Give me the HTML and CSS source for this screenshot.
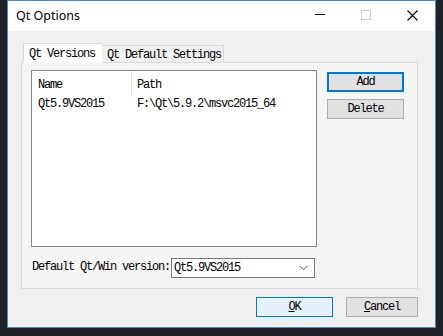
FILE: index.html
```html
<!DOCTYPE html>
<html>
<head>
<meta charset="utf-8">
<link rel="stylesheet" href="styles.css">
</head>
<body>
<div class="window">
  <div class="titlebar">
    <span class="title">Qt Options</span>
    <div class="controls">
      <span class="ctl"><svg width="10" height="10" viewBox="0 0 10 10"><line x1="0" y1="4.5" x2="10" y2="4.5" stroke="#000" stroke-width="1"/></svg></span>
      <span class="ctl"><svg width="10" height="10" viewBox="0 0 10 10"><rect x="0.5" y="0.5" width="9" height="9" fill="none" stroke="#cccccc" stroke-width="1"/></svg></span>
      <span class="ctl"><svg width="11" height="11" viewBox="0 0 11 11"><path d="M0.5 0.5 L10.5 10.5 M10.5 0.5 L0.5 10.5" stroke="#000" stroke-width="1.1" fill="none"/></svg></span>
    </div>
  </div>
  <div class="body">
    <div class="tabs">
      <div class="tabbar">
        <div class="tab active">Qt Versions</div>
        <div class="tab">Qt Default Settings</div>
      </div>
      <div class="pane">
        <div class="main">
          <div class="list">
            <div class="hdr"><span class="c1">Name</span><span class="c2">Path</span></div>
            <div class="row"><span class="c1">Qt5.9VS2015</span><span class="c2">F:\Qt\5.9.2\msvc2015_64</span></div>
          </div>
          <div class="side">
            <button class="btn default">Add</button>
            <button class="btn">Delete</button>
          </div>
        </div>
        <div class="defrow">
          <span class="lbl">Default Qt/Win version:</span>
          <div class="combo">
            <span class="val">Qt5.9VS2015</span>
            <svg width="9" height="6" viewBox="0 0 9 6"><path d="M0.5 0.8 L4.5 4.8 L8.5 0.8" stroke="#555" stroke-width="1" fill="none"/></svg>
          </div>
        </div>
      </div>
    </div>
    <div class="footer">
      <button class="btn ok"><u>O</u>K</button>
      <button class="btn cancel"><u>C</u>ancel</button>
    </div>
  </div>
</div>
</body>
</html>
```
FILE: styles.css
```css
html, body {
  margin: 0;
  padding: 0;
}
body {
  background: #1f2327;
  width: 443px;
  height: 336px;
  overflow: hidden;
  font-family: "Liberation Mono", monospace;
  font-size: 12px;
  letter-spacing: -1.2px;
  color: #000;
}
.window {
  margin-left: 7px;
  width: 429px;
  height: 328px;
  box-sizing: border-box;
  border: 1px solid #4a88c8;
  background: #f0f0f0;
  display: flex;
  flex-direction: column;
}
.titlebar {
  height: 30px;
  background: #fff;
  display: flex;
  align-items: center;
  padding-left: 8px;
  flex: none;
}
.title {
  font-family: "Noto Sans", sans-serif;
  font-size: 12.5px;
  letter-spacing: 0;
  padding-bottom: 1px;
}
.controls {
  margin-left: auto;
  display: flex;
  height: 30px;
}
.ctl {
  width: 46px;
  height: 30px;
  display: flex;
  align-items: center;
  justify-content: center;
  padding-bottom: 2px;
  box-sizing: border-box;
}
.body {
  padding: 12px 17px 10px 13px;
  display: flex;
  flex-direction: column;
}
.tabbar {
  display: flex;
  align-items: flex-end;
  height: 19px;
  padding-left: 2px;
}
.tab {
  height: 17px;
  box-sizing: border-box;
  border: 1px solid #d9d9d9;
  border-bottom: none;
  border-left: none;
  background: #f0f0f0;
  padding: 2px 0 0 5px;
  width: 122px;
  line-height: 14px;
}
.tab.active {
  height: 20px;
  margin-bottom: -1px;
  width: 79px;
  border-left: 1px solid #d9d9d9;
  border-right: none;
  background: #fff;
  padding: 3px 0 0 5px;
  position: relative;
  z-index: 1;
}
.pane {
  width: 397px;
  height: 227px;
  box-sizing: border-box;
  border: 1px solid #d9d9d9;
  background: #f5f5f5;
  padding: 7px 13px 0 9px;
}
.main {
  display: flex;
  gap: 10px;
}
.list {
  width: 286px;
  height: 177px;
  box-sizing: border-box;
  border: 1px solid #828790;
  background: #fff;
}
.hdr, .row {
  display: flex;
}
.hdr {
  height: 25px;
}
.row {
  height: 16px;
  align-items: center;
}
.c1 {
  width: 100px;
  box-sizing: border-box;
  padding-left: 6px;
}
.c2 {
  padding-left: 5px;
}
.hdr .c1, .hdr .c2 {
  height: 25px;
  line-height: 28px;
}
.hdr .c1 {
  border-right: 1px solid #e5e5e5;
}
.side {
  display: flex;
  flex-direction: column;
  gap: 7px;
  padding-top: 2px;
}
.btn {
  width: 77px;
  height: 20px;
  box-sizing: border-box;
  border: 1px solid #adadad;
  background: #e1e1e1;
  font-family: "Liberation Mono", monospace;
  font-size: 12px;
  letter-spacing: -1.2px;
  color: #000;
  padding: 0;
  margin: 0;
  line-height: 16px;
}
.btn.default {
  border: 2px solid #0078d7;
}
.defrow {
  margin-top: 11px;
  display: flex;
  align-items: center;
}
.lbl {
  margin-left: 1px;
  width: 139px;
  white-space: nowrap;
  padding-bottom: 2px;
}
.combo {
  width: 144px;
  height: 20px;
  box-sizing: border-box;
  border: 1px solid #7a7a7a;
  background: #fff;
  display: flex;
  align-items: center;
  padding: 0 6px 0 2px;
}
.combo svg {
  margin-left: auto;
}
.footer {
  margin-top: 8px;
  display: flex;
  justify-content: flex-end;
  gap: 13px;
}
.btn.ok {
  background: #e5f1fb;
  border-color: #0078d7;
}
.btn.cancel {
  width: 72px;
}
```
